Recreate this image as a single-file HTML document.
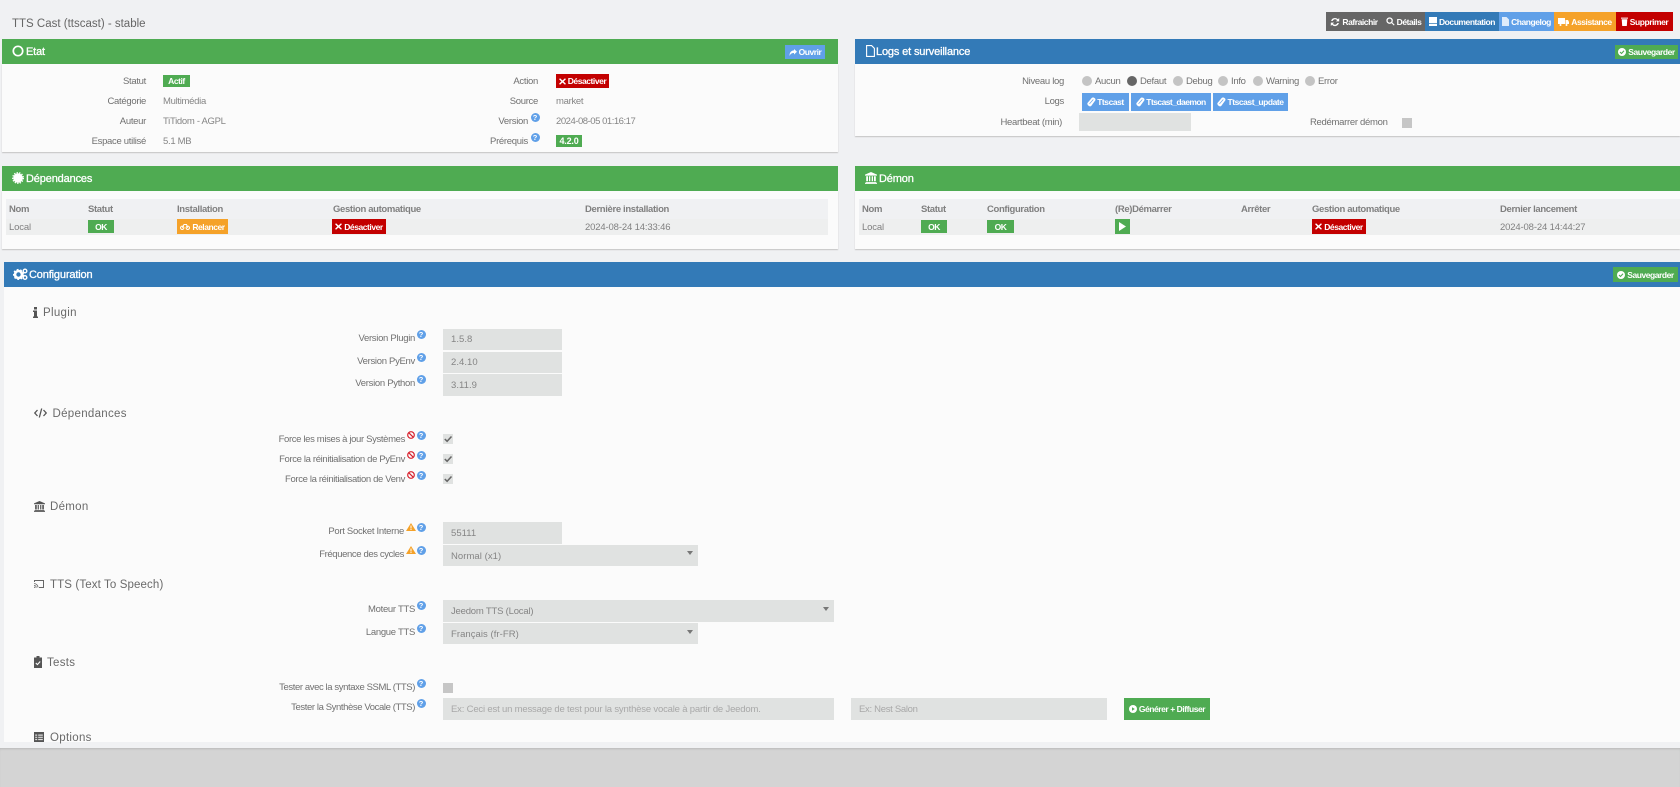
<!DOCTYPE html>
<html lang="fr"><head><meta charset="utf-8"><title>TTS Cast</title>
<style>
html,body{margin:0;padding:0;width:1680px;height:787px;overflow:hidden;background:#f0f1f3;font-family:"Liberation Sans",sans-serif}
#p{position:relative;width:1680px;height:787px;overflow:hidden}
#p div,#p span.a{position:absolute;box-sizing:border-box}
.gr{background:#4fab52}.bl{background:#337ab7}.lb{background:#60a0e8}.or{background:#f5a229}.rd{background:#c30000}.dk{background:#666}
.body{background:#fbfbfb;box-shadow:0 1px 1px #c4c4c4}
.t{font-size:9.5px;letter-spacing:-.3px;color:#707070;line-height:14px;height:14px;white-space:nowrap;margin-top:1px}
.r{text-align:right}
.n{letter-spacing:-.35px}
.h{font-size:11px;letter-spacing:-.15px;color:#fff;line-height:16px;height:16px;white-space:nowrap;-webkit-text-stroke:.3px #fff;margin-top:1px}
.s{font-size:11.5px;letter-spacing:.3px;color:#6a6a6a;line-height:16px;height:16px;white-space:nowrap;margin-top:1px}
.th{font-size:9.5px;font-weight:700;letter-spacing:-.35px;color:#808080;line-height:14px;height:14px;white-space:nowrap;margin-top:1px}
.td{font-size:9.5px;letter-spacing:-.15px;color:#808080;line-height:14px;height:14px;white-space:nowrap;margin-top:1px}
.v{font-size:9.5px;letter-spacing:.05px;color:#858585;line-height:14px;height:14px;white-space:nowrap;margin-top:1px}
.b{display:flex;align-items:center;justify-content:center;gap:2px;color:#fff;font-size:8.5px;font-weight:700;letter-spacing:-.45px;white-space:nowrap}
.b svg{flex:none;fill:#fff}
.i{background:#e0e2e1}
.c{background:#c6c6c6;width:10px;height:10px}
.k{background:#e0e2e1;width:10px;height:10px}
.o{width:10px;height:10px;border-radius:50%;background:#c4c4c4}
.q{width:9px;height:9px;margin:-.5px 0 0 -.5px;border-radius:50%;background:#60a0e8;color:#fff;font-size:7.5px;font-weight:700;line-height:9px;text-align:center}
.ar{width:0;height:0;border-left:3px solid transparent;border-right:3px solid transparent;border-top:4px solid #777}
svg{display:block}
</style></head><body><div id="p">

<div class="t" style="left:12px;top:15px;font-size:11.5px;letter-spacing:0;color:#666;height:16px;line-height:16px">TTS Cast (ttscast) - stable</div>

<!-- top buttons -->
<div class="dk" style="left:1326px;top:12px;width:99px;height:19px"></div>
<div class="b" style="left:1328px;top:12px;width:52px;height:19px"><svg width="10" height="10" viewBox="0 0 10 10"><path d="M5 1a4 4 0 0 1 3 1.300L9.200 1v3.400H5.800l1.300-1.200A2.600 2.600 0 0 0 2.600 4H1.100A4 4 0 0 1 5 1zM.8 5.600h3.400L2.900 6.800A2.600 2.600 0 0 0 7.400 6h1.500A4 4 0 0 1 2 7.700L.8 9z"/></svg>Rafraichir</div>
<div class="b" style="left:1384px;top:12px;width:39px;height:19px"><svg width="9" height="9" viewBox="0 0 10 10"><circle cx="4" cy="4" r="2.900" fill="none" stroke="#fff" stroke-width="1.400"/><path d="M6 6.600L6.800 5.800 9.600 8.600 8.700 9.500z"/></svg>Détails</div>
<div class="b bl" style="left:1425px;top:12px;width:74px;height:19px"><svg width="8" height="9" viewBox="0 0 8 9"><path d="M0 0h8v6.200H0zM0 7h8v2H0z"/></svg>Documentation</div>
<div class="b lb" style="left:1499px;top:12px;width:55px;height:19px"><svg width="7" height="9" viewBox="0 0 7 9"><path d="M0 0h4.500L7 2.500V9H0z" fill-opacity=".8"/></svg>Changelog</div>
<div class="b or" style="left:1554px;top:12px;width:62px;height:19px"><svg width="11" height="8" viewBox="0 0 11 8"><path d="M0 0h7v6H0zM7.500 2H10l1 2v2H7.500z"/><circle cx="2.500" cy="7" r="1"/><circle cx="8.500" cy="7" r="1"/></svg>Assistance</div>
<div class="b rd" style="left:1616px;top:12px;width:57px;height:19px"><svg width="7" height="9" viewBox="0 0 7 9"><path d="M0 .6h7v1H0zM.7 2.200h5.600L5.800 9H1.200z"/></svg>Supprimer</div>

<!-- Etat -->
<div class="gr" style="left:2px;top:39px;width:836px;height:25px"></div>
<div class="body" style="left:2px;top:64px;width:836px;height:88px"></div>
<svg style="position:absolute;left:12px;top:45px" width="12" height="12" viewBox="0 0 12 12"><circle cx="6" cy="6" r="4.700" fill="none" stroke="#fff" stroke-width="1.700"/></svg>
<div class="h" style="left:26px;top:43px">Etat</div>
<div class="b lb" style="left:785px;top:45px;width:40px;height:14px"><svg width="8" height="7" viewBox="0 0 8 7"><path d="M5 0l3 2.700-3 2.800V4C3 4 1.500 4.500.6 7 .4 3.500 2 1.600 5 1.400z"/></svg>Ouvrir</div>

<div class="t r" style="right:1534px;top:74px">Statut</div>
<div class="b gr" style="left:163px;top:75px;width:27px;height:12px">Actif</div>
<div class="t r" style="right:1534px;top:94px">Catégorie</div><div class="t" style="left:163px;top:94px;color:#858585">Multimédia</div>
<div class="t r" style="right:1534px;top:114px">Auteur</div><div class="t" style="left:163px;top:114px;color:#858585">TiTidom - AGPL</div>
<div class="t r" style="right:1534px;top:134px">Espace utilisé</div><div class="t" style="left:163px;top:134px;color:#858585">5.1 MB</div>

<div class="t r" style="right:1142px;top:74px">Action</div>
<div class="b rd" style="left:556px;top:74px;width:53px;height:14px"><svg width="7" height="7" viewBox="0 0 7 7"><path d="M1 .2L3.500 2.500 6 .2 6.900 1.200 4.600 3.500 6.900 5.800 6 6.800 3.500 4.500 1 6.800.1 5.800 2.400 3.500.1 1.200z"/></svg>Désactiver</div>
<div class="t r" style="right:1142px;top:94px">Source</div><div class="t" style="left:556px;top:94px;color:#858585">market</div>
<div class="t r" style="right:1152px;top:114px">Version</div><div class="q" style="left:531px;top:113px">?</div>
<div class="t" style="left:556px;top:114px;color:#858585;letter-spacing:-.47px">2024-08-05 01:16:17</div>
<div class="t r" style="right:1152px;top:134px">Prérequis</div><div class="q" style="left:531px;top:133px">?</div>
<div class="b gr" style="left:556px;top:135px;width:26px;height:12px;font-size:9px;letter-spacing:-.2px">4.2.0</div>

<!-- Logs -->
<div class="bl" style="left:855px;top:39px;width:825px;height:25px"></div>
<div class="body" style="left:855px;top:64px;width:825px;height:72px"></div>
<svg style="position:absolute;left:866px;top:45px" width="9" height="12" viewBox="0 0 9 12"><path d="M.6.600h5L8.400 3.400V11.400H.6z" fill="none" stroke="#fff" stroke-width="1.100"/></svg>
<div class="h" style="left:876px;top:43px">Logs et surveillance</div>
<div class="b gr" style="left:1615px;top:45px;width:63px;height:14px"><svg width="8" height="8" viewBox="0 0 8 8"><circle cx="4" cy="4" r="4"/><path d="M2 4l1.500 1.500L6 2.800" fill="none" stroke="#4fab52" stroke-width="1.100"/></svg>Sauvegarder</div>

<div class="t r" style="right:616px;top:74px">Niveau log</div>
<div class="o" style="left:1082px;top:76px"></div><div class="t" style="left:1095px;top:74px">Aucun</div>
<div class="o" style="left:1127px;top:76px;background:#666"></div><div class="t" style="left:1140px;top:74px">Defaut</div>
<div class="o" style="left:1173px;top:76px"></div><div class="t" style="left:1186px;top:74px">Debug</div>
<div class="o" style="left:1218px;top:76px"></div><div class="t" style="left:1231px;top:74px">Info</div>
<div class="o" style="left:1253px;top:76px"></div><div class="t" style="left:1266px;top:74px">Warning</div>
<div class="o" style="left:1305px;top:76px"></div><div class="t" style="left:1318px;top:74px">Error</div>

<div class="t r" style="right:616px;top:94px">Logs</div>
<div class="b lb" style="left:1082px;top:93px;width:47px;height:18px;gap:1px"><svg width="9" height="10" viewBox="0 0 9 10"><path d="M.5 6L4.700 1C6 -.4 9.300 1.400 8.300 3.400L4.300 8.900C3 10.500 -.3 8 .5 6z"/><path d="M2.500 6.800L6.300 2.500" stroke="#60a0e8" stroke-width=".7" fill="none"/></svg>Ttscast</div>
<div class="b lb" style="left:1131px;top:93px;width:80px;height:18px;gap:1px;letter-spacing:-.55px"><svg width="9" height="10" viewBox="0 0 9 10"><path d="M.5 6L4.700 1C6 -.4 9.300 1.400 8.300 3.400L4.300 8.900C3 10.500 -.3 8 .5 6z"/><path d="M2.500 6.800L6.300 2.500" stroke="#60a0e8" stroke-width=".7" fill="none"/></svg>Ttscast_daemon</div>
<div class="b lb" style="left:1213px;top:93px;width:75px;height:18px;gap:1px"><svg width="9" height="10" viewBox="0 0 9 10"><path d="M.5 6L4.700 1C6 -.4 9.300 1.400 8.300 3.400L4.300 8.900C3 10.500 -.3 8 .5 6z"/><path d="M2.500 6.800L6.300 2.500" stroke="#60a0e8" stroke-width=".7" fill="none"/></svg>Ttscast_update</div>

<div class="t r" style="right:618px;top:115px">Heartbeat (min)</div>
<div class="i" style="left:1079px;top:113px;width:112px;height:18px"></div>
<div class="t" style="left:1310px;top:115px">Redémarrer démon</div>
<div class="c" style="left:1402px;top:118px"></div>

<!-- Dépendances -->
<div class="gr" style="left:2px;top:166px;width:836px;height:25px"></div>
<div class="body" style="left:2px;top:191px;width:836px;height:58px"></div>
<svg style="position:absolute;left:12px;top:172px" width="12" height="12" viewBox="0 0 12 12"><circle cx="6" cy="6" r="4.800" fill="#fff"/><circle cx="6" cy="6" r="5.300" fill="none" stroke="#fff" stroke-width="1.400" stroke-dasharray="1.300 1.300"/></svg>
<div class="h" style="left:26px;top:170px">Dépendances</div>

<div style="left:6px;top:199px;width:822px;height:20px;background:#f0f1f3"></div>
<div style="left:6px;top:219px;width:822px;height:16px;background:#eeefef"></div>
<div class="th" style="left:9px;top:202px">Nom</div><div class="th" style="left:88px;top:202px">Statut</div><div class="th" style="left:177px;top:202px">Installation</div><div class="th" style="left:333px;top:202px">Gestion automatique</div><div class="th" style="left:585px;top:202px">Dernière installation</div>
<div class="td" style="left:9px;top:220px">Local</div>
<div class="b gr" style="left:88px;top:220px;width:26px;height:13px">OK</div>
<div class="b or" style="left:177px;top:219px;width:51px;height:15px"><svg width="10" height="7" viewBox="0 0 10 7"><circle cx="2.200" cy="4.800" r="1.700" fill="none" stroke="#fff"/><circle cx="7.800" cy="4.800" r="1.700" fill="none" stroke="#fff"/><path d="M2.200 4.800L4 1.500h2.500l1.300 3.300" fill="none" stroke="#fff"/></svg>Relancer</div>
<div class="b rd" style="left:332px;top:219px;width:54px;height:15px"><svg width="7" height="7" viewBox="0 0 7 7"><path d="M1 .2L3.500 2.500 6 .2 6.900 1.200 4.600 3.500 6.900 5.800 6 6.800 3.500 4.500 1 6.800.1 5.800 2.400 3.500.1 1.200z"/></svg>Désactiver</div>
<div class="td" style="left:585px;top:220px">2024-08-24 14:33:46</div>

<!-- Démon -->
<div class="gr" style="left:855px;top:166px;width:825px;height:25px"></div>
<div class="body" style="left:855px;top:191px;width:825px;height:58px"></div>
<svg style="position:absolute;left:865px;top:172px" width="12" height="12" viewBox="0 0 12 12"><path d="M6 0l6 2.600V3.600H0V2.600zM1.200 4.300h1.800v5H1.200zM4 4.300h1.300v5H4zM6.700 4.300H8v5H6.700zM9 4.300h1.800v5H9zM.6 10h10.800v.9H.6zM0 11.100h12V12H0z" fill="#fff"/></svg>
<div class="h" style="left:879px;top:170px">Démon</div>

<div style="left:859px;top:199px;width:821px;height:20px;background:#f0f1f3"></div>
<div style="left:859px;top:219px;width:821px;height:16px;background:#eeefef"></div>
<div class="th" style="left:862px;top:202px">Nom</div><div class="th" style="left:921px;top:202px">Statut</div><div class="th" style="left:987px;top:202px">Configuration</div><div class="th" style="left:1115px;top:202px">(Re)Démarrer</div><div class="th" style="left:1241px;top:202px">Arrêter</div><div class="th" style="left:1312px;top:202px">Gestion automatique</div><div class="th" style="left:1500px;top:202px">Dernier lancement</div>
<div class="td" style="left:862px;top:220px">Local</div>
<div class="b gr" style="left:921px;top:220px;width:26px;height:13px">OK</div>
<div class="b gr" style="left:987px;top:220px;width:27px;height:13px">OK</div>
<div class="b gr" style="left:1115px;top:219px;width:15px;height:15px"><svg width="7" height="9" viewBox="0 0 7 9"><path d="M0 0l7 4.500L0 9z"/></svg></div>
<div class="b rd" style="left:1312px;top:219px;width:54px;height:15px"><svg width="7" height="7" viewBox="0 0 7 7"><path d="M1 .2L3.500 2.500 6 .2 6.900 1.200 4.600 3.500 6.900 5.800 6 6.800 3.500 4.500 1 6.800.1 5.800 2.400 3.500.1 1.200z"/></svg>Désactiver</div>
<div class="td" style="left:1500px;top:220px">2024-08-24 14:44:27</div>

<!-- Configuration -->
<div class="bl" style="left:4px;top:262px;width:1676px;height:25px"></div>
<div style="left:4px;top:287px;width:1676px;height:455px;background:#fbfbfb"></div>
<svg style="position:absolute;left:13px;top:268px" width="15" height="12" viewBox="0 0 15 12"><circle cx="5.500" cy="6.500" r="3.500" fill="none" stroke="#fff" stroke-width="2.600"/><circle cx="5.500" cy="6.500" r="5" fill="none" stroke="#fff" stroke-width="1.200" stroke-dasharray="1.800 1.800"/><circle cx="12" cy="3" r="1.800" fill="none" stroke="#fff" stroke-width="1.400"/><circle cx="12" cy="9.500" r="1.800" fill="none" stroke="#fff" stroke-width="1.400"/></svg>
<div class="h" style="left:29px;top:266px">Configuration</div>
<div class="b gr" style="left:1613px;top:267px;width:65px;height:15px"><svg width="8" height="8" viewBox="0 0 8 8"><circle cx="4" cy="4" r="4"/><path d="M2 4l1.500 1.500L6 2.800" fill="none" stroke="#4fab52" stroke-width="1.100"/></svg>Sauvegarder</div>

<!-- Sections -->
<svg style="position:absolute;left:33px;top:307px" width="5" height="11" viewBox="0 0 5 11"><path d="M1 0h3v2.500H1zM0 3.500h4V9.500h1V11H0V9.500h1V5H0z" fill="#555"/></svg>
<div class="s" style="left:43px;top:304px">Plugin</div>
<svg style="position:absolute;left:34px;top:408px" width="13" height="10" viewBox="0 0 13 10"><path d="M3.500 2L.8 5l2.700 3M9.500 2L12.200 5 9.500 8M7.700.5L5.300 9.500" fill="none" stroke="#555" stroke-width="1.300"/></svg>
<div class="s" style="left:52.500px;top:405px">Dépendances</div>
<svg style="position:absolute;left:34px;top:501px" width="11" height="11" viewBox="0 0 12 12"><path d="M6 0l6 2.600V3.600H0V2.600zM1.200 4.300h1.800v5H1.200zM4 4.300h1.300v5H4zM6.700 4.300H8v5H6.700zM9 4.300h1.800v5H9zM.6 10h10.800v.9H.6zM0 11.100h12V12H0z" fill="#555"/></svg>
<div class="s" style="left:50px;top:498px">Démon</div>
<svg style="position:absolute;left:34px;top:580px" width="10" height="8" viewBox="0 0 10 8"><path d="M.5 2V.5h9v7H5" fill="none" stroke="#666"/><path d="M0 3.500a4 4 0 0 1 4 4M0 5.300a2.300 2.300 0 0 1 2.300 2.300" fill="none" stroke="#666" stroke-width=".8"/><circle cx=".7" cy="7.300" r=".7" fill="#666"/></svg>
<div class="s" style="left:50px;top:576px;letter-spacing:.12px">TTS (Text To Speech)</div>
<svg style="position:absolute;left:34px;top:656px" width="8" height="12" viewBox="0 0 8 12"><path d="M2.500 1.500V0h3v1.500H8V12H0V1.500z" fill="#555"/><path d="M1.800 7l1.600 1.600L6.200 5.500" fill="none" stroke="#fff" stroke-width="1.100"/></svg>
<div class="s" style="left:47px;top:654px">Tests</div>
<svg style="position:absolute;left:34px;top:732px" width="10" height="10" viewBox="0 0 10 10"><path d="M0 0h10v10H0z" fill="#555"/><path d="M1.200 2.500h2v1.200h-2zM4.200 2.500h4.600v1.200H4.200zM1.200 4.700h2v1.200h-2zM4.200 4.700h4.600v1.200H4.200zM1.200 6.900h2v1.200h-2zM4.200 6.900h4.600v1.200H4.200z" fill="#ddd"/></svg>
<div class="s" style="left:50px;top:729px">Options</div>

<!-- Plugin fields -->
<div class="t r" style="right:1265px;top:331px">Version Plugin</div><div class="q" style="left:417px;top:330px">?</div>
<div class="i" style="left:443px;top:329px;width:119px;height:21px"></div><div class="v" style="left:451px;top:332px">1.5.8</div>
<div class="t r" style="right:1265px;top:354px">Version PyEnv</div><div class="q" style="left:417px;top:353px">?</div>
<div class="i" style="left:443px;top:352px;width:119px;height:21px"></div><div class="v" style="left:451px;top:355px">2.4.10</div>
<div class="t r" style="right:1265px;top:376px">Version Python</div><div class="q" style="left:417px;top:375px">?</div>
<div class="i" style="left:443px;top:374px;width:119px;height:22px"></div><div class="v" style="left:451px;top:378px">3.11.9</div>

<!-- Dépendances fields -->
<div class="t r n" style="right:1275px;top:432px">Force les mises à jour Systèmes</div>
<svg style="position:absolute;left:407px;top:431px" width="8" height="8" viewBox="0 0 8 8"><circle cx="4" cy="4" r="3.300" fill="none" stroke="#d8232f" stroke-width="1.200"/><path d="M1.800 1.800l4.400 4.400" stroke="#d8232f" stroke-width="1.200"/></svg><div class="q" style="left:417px;top:431px">?</div>
<div class="k" style="left:443px;top:434px"></div><svg style="position:absolute;left:443px;top:434px" width="10" height="10" viewBox="0 0 10 10"><path d="M1.800 5l2.300 2.300L8.500 2.500" fill="none" stroke="#666" stroke-width="1.500"/></svg>
<div class="t r n" style="right:1275px;top:452px">Force la réinitialisation de PyEnv</div>
<svg style="position:absolute;left:407px;top:451px" width="8" height="8" viewBox="0 0 8 8"><circle cx="4" cy="4" r="3.300" fill="none" stroke="#d8232f" stroke-width="1.200"/><path d="M1.800 1.800l4.400 4.400" stroke="#d8232f" stroke-width="1.200"/></svg><div class="q" style="left:417px;top:451px">?</div>
<div class="k" style="left:443px;top:454px"></div><svg style="position:absolute;left:443px;top:454px" width="10" height="10" viewBox="0 0 10 10"><path d="M1.800 5l2.300 2.300L8.500 2.500" fill="none" stroke="#666" stroke-width="1.500"/></svg>
<div class="t r n" style="right:1275px;top:472px">Force la réinitialisation de Venv</div>
<svg style="position:absolute;left:407px;top:471px" width="8" height="8" viewBox="0 0 8 8"><circle cx="4" cy="4" r="3.300" fill="none" stroke="#d8232f" stroke-width="1.200"/><path d="M1.800 1.800l4.400 4.400" stroke="#d8232f" stroke-width="1.200"/></svg><div class="q" style="left:417px;top:471px">?</div>
<div class="k" style="left:443px;top:474px"></div><svg style="position:absolute;left:443px;top:474px" width="10" height="10" viewBox="0 0 10 10"><path d="M1.800 5l2.300 2.300L8.500 2.500" fill="none" stroke="#666" stroke-width="1.500"/></svg>

<!-- Démon fields -->
<div class="t r" style="right:1276px;top:524px">Port Socket Interne</div>
<svg style="position:absolute;left:406px;top:523px" width="10" height="8" viewBox="0 0 10 8"><path d="M5 0l5 8H0z" fill="#f5a229"/><path d="M4.500 2.500h1V5.500h-1zM4.500 6h1v1h-1z" fill="#fff"/></svg><div class="q" style="left:417px;top:523px">?</div>
<div class="i" style="left:443px;top:522px;width:119px;height:22px"></div><div class="v" style="left:451px;top:526px">55111</div>
<div class="t r n" style="right:1276px;top:547px;letter-spacing:-.38px">Fréquence des cycles</div>
<svg style="position:absolute;left:406px;top:546px" width="10" height="8" viewBox="0 0 10 8"><path d="M5 0l5 8H0z" fill="#f5a229"/><path d="M4.500 2.500h1V5.500h-1zM4.500 6h1v1h-1z" fill="#fff"/></svg><div class="q" style="left:417px;top:546px">?</div>
<div class="i" style="left:443px;top:545px;width:255px;height:21px"></div><div class="v" style="left:451px;top:549px">Normal (x1)</div><div class="ar" style="left:687px;top:551px"></div>

<!-- TTS fields -->
<div class="t r" style="right:1265px;top:602px">Moteur TTS</div><div class="q" style="left:417px;top:601px">?</div>
<div class="i" style="left:443px;top:600px;width:391px;height:22px"></div><div class="v" style="left:451px;top:604px;letter-spacing:-.2px">Jeedom TTS (Local)</div><div class="ar" style="left:823px;top:607px"></div>
<div class="t r" style="right:1265px;top:625px">Langue TTS</div><div class="q" style="left:417px;top:624px">?</div>
<div class="i" style="left:443px;top:623px;width:255px;height:21px"></div><div class="v" style="left:451px;top:627px">Français (fr-FR)</div><div class="ar" style="left:687px;top:630px"></div>

<!-- Tests fields -->
<div class="t r n" style="right:1265px;top:680px;letter-spacing:-.4px">Tester avec la syntaxe SSML (TTS)</div><div class="q" style="left:417px;top:679px">?</div>
<div class="c" style="left:443px;top:683px"></div>
<div class="t r n" style="right:1265px;top:700px;letter-spacing:-.4px">Tester la Synthèse Vocale (TTS)</div><div class="q" style="left:417px;top:699px">?</div>
<div class="i" style="left:443px;top:698px;width:391px;height:22px"></div><div class="t" style="left:451px;top:702px;color:#a8a8a8;letter-spacing:-.18px">Ex: Ceci est un message de test pour la synthèse vocale à partir de Jeedom.</div>
<div class="i" style="left:851px;top:698px;width:256px;height:22px"></div><div class="t" style="left:859px;top:702px;color:#a8a8a8">Ex: Nest Salon</div>
<div class="b gr" style="left:1124px;top:698px;width:86px;height:22px"><svg width="8" height="8" viewBox="0 0 8 8"><circle cx="4" cy="4" r="4"/><path d="M3 2.200L5.800 4 3 5.800z" fill="#4fab52"/></svg>Générer + Diffuser</div>

<!-- Footer -->
<div style="left:0;top:748px;width:1680px;height:39px;background:#d4d4d4;box-shadow:inset 0 2px 2px -1px #b8b8b8"></div>
</div></body></html>
